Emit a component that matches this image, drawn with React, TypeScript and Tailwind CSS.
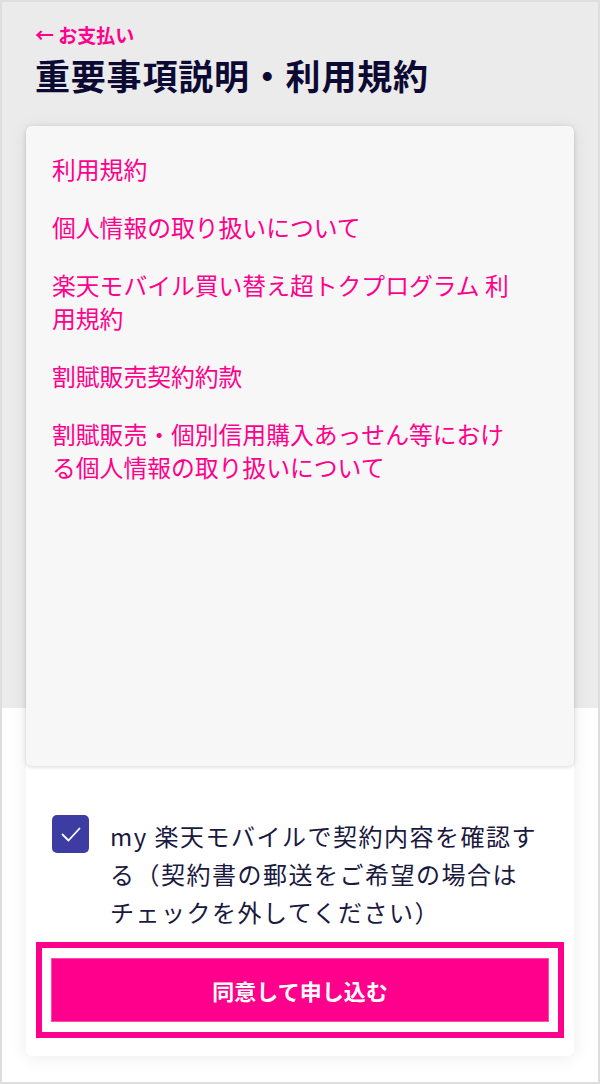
import React, { useState } from 'react';

const terms = [
  '利用規約',
  '個人情報の取り扱いについて',
  '楽天モバイル買い替え超トクプログラム 利用規約',
  '割賦販売契約約款',
  '割賦販売・個別信用購入あっせん等における個人情報の取り扱いについて',
];

function App() {
  const [checked, setChecked] = useState(true);

  return (
    <div className="min-h-screen w-full border-2 border-[#dedede] bg-[linear-gradient(#ebebeb_706px,#ffffff_706px)] font-['Noto_Sans_CJK_JP',sans-serif]">
      {/* header */}
      <div className="pl-[33px] pt-[21px]">
        <a href="#" className="block text-[19px] leading-[24px] font-bold text-[#ff008c]">
          ← お支払い
        </a>
        <h1 className="mt-[6px] text-[35px] leading-[44px] font-bold tracking-[0.8px] text-[#0c0a33]">
          重要事項説明・利用規約
        </h1>
      </div>

      {/* card */}
      <div className="mx-[24px] mt-[29px] rounded-md bg-white pb-[18px] shadow-[0_2px_18px_rgba(0,0,0,0.08)]">
        <div className="h-[640px] rounded-md bg-[#f7f7f7] px-[26px] pt-[26px] shadow-[0_1px_4px_rgba(0,0,0,0.16)]">
          <ul className="flex max-w-[470px] flex-col gap-[25px]">
            {terms.map((t) => (
              <li key={t}>
                <a href="#" className="text-[23.8px] leading-[33px] text-[#ff008c]">
                  {t}
                </a>
              </li>
            ))}
          </ul>
        </div>

        <label className="mt-[49px] flex items-start gap-[21px] pl-[26px]">
          <button
            type="button"
            onClick={() => setChecked(!checked)}
            className={`flex h-[38px] w-[37px] shrink-0 items-center justify-center rounded-[5px] ${checked ? 'bg-[#3c3ca3]' : 'border-2 border-[#3c3ca3] bg-white'}`}
          >
            {checked && (
              <svg width="20" height="15" viewBox="0 0 20 15" fill="none">
                <path d="M1.5 7.5l6 6L18.5 1.5" stroke="white" strokeWidth="1.8" strokeLinecap="round" strokeLinejoin="round" />
              </svg>
            )}
          </button>
          <span className="mt-[2px] w-[430px] text-[24px] leading-[38px] tracking-[1.5px] text-[#1a1940]">
            my 楽天モバイルで契約内容を確認する（契約書の郵送をご希望の場合はチェックを外してください）
          </span>
        </label>

        <div className="mx-[10px] mt-[11px] border-[6px] border-[#ff008c] px-[9px] py-[10px]">
          <button
            type="button"
            className="flex h-[64px] w-full items-center justify-center border border-[#ff4daf] bg-[#ff008c] text-[22px] font-bold text-white"
          >
            同意して申し込む
          </button>
        </div>
      </div>
    </div>
  );
}

export default App;
